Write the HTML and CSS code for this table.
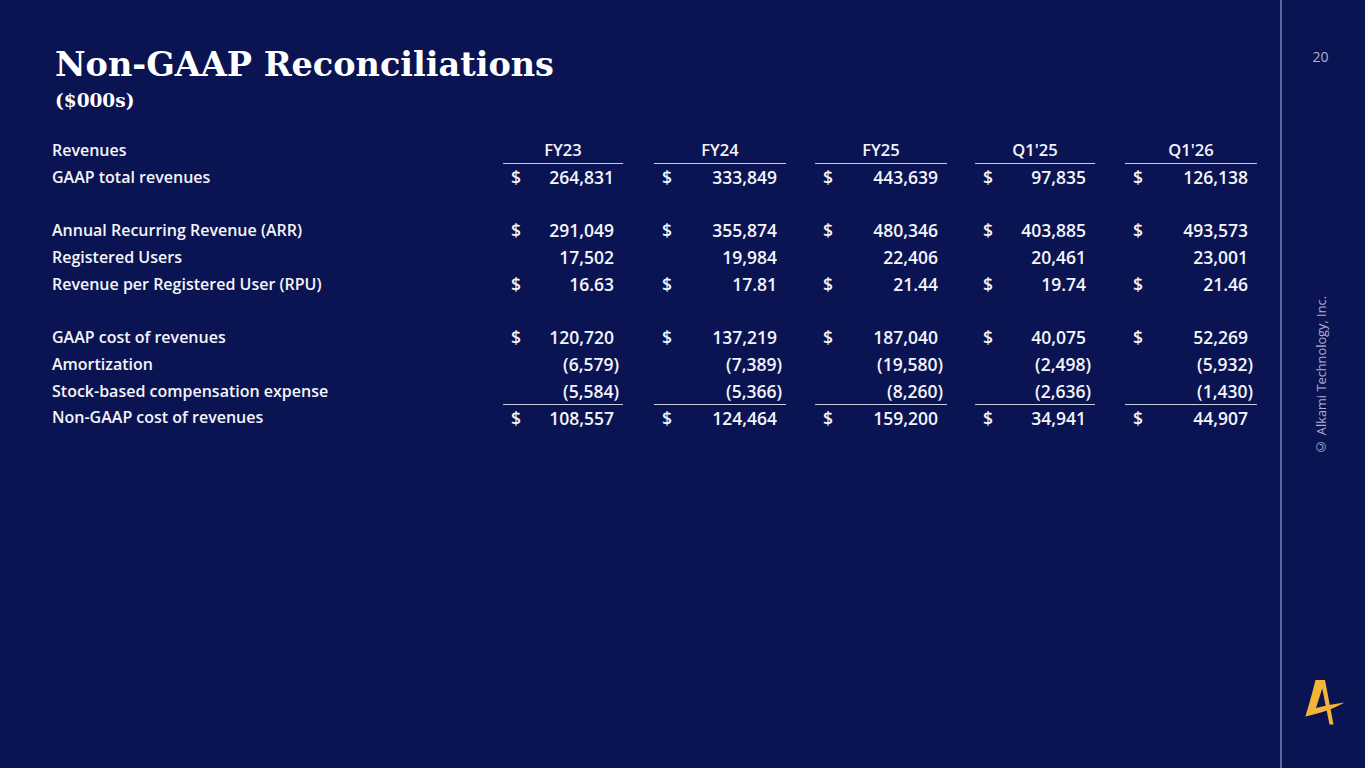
FILE: index.html
```html
<!DOCTYPE html>
<html lang="en">
<head>
<meta charset="utf-8">
<title>Non-GAAP Reconciliations</title>
<link rel="stylesheet" href="styles.css">
</head>
<body>
<div class="slide">
  <main class="content">
    <h1 class="title">Non-GAAP Reconciliations</h1>
    <p class="subtitle">($000s)</p>
    <div class="table">
      <div class="row head">
        <div class="label">Revenues</div>
        <div class="cell c1">FY23</div>
        <div class="cell c2">FY24</div>
        <div class="cell c3">FY25</div>
        <div class="cell c4">Q1'25</div>
        <div class="cell c5">Q1'26</div>
      </div>
      <div class="row">
        <div class="label">GAAP total revenues</div>
        <div class="cell c1"><span>$</span><span>264,831</span></div>
        <div class="cell c2"><span>$</span><span>333,849</span></div>
        <div class="cell c3"><span>$</span><span>443,639</span></div>
        <div class="cell c4"><span>$</span><span>97,835</span></div>
        <div class="cell c5"><span>$</span><span>126,138</span></div>
      </div>
      <div class="row"></div>
      <div class="row">
        <div class="label">Annual Recurring Revenue (ARR)</div>
        <div class="cell c1"><span>$</span><span>291,049</span></div>
        <div class="cell c2"><span>$</span><span>355,874</span></div>
        <div class="cell c3"><span>$</span><span>480,346</span></div>
        <div class="cell c4"><span>$</span><span>403,885</span></div>
        <div class="cell c5"><span>$</span><span>493,573</span></div>
      </div>
      <div class="row">
        <div class="label">Registered Users</div>
        <div class="cell c1"><span></span><span>17,502</span></div>
        <div class="cell c2"><span></span><span>19,984</span></div>
        <div class="cell c3"><span></span><span>22,406</span></div>
        <div class="cell c4"><span></span><span>20,461</span></div>
        <div class="cell c5"><span></span><span>23,001</span></div>
      </div>
      <div class="row">
        <div class="label">Revenue per Registered User (RPU)</div>
        <div class="cell c1"><span>$</span><span>16.63</span></div>
        <div class="cell c2"><span>$</span><span>17.81</span></div>
        <div class="cell c3"><span>$</span><span>21.44</span></div>
        <div class="cell c4"><span>$</span><span>19.74</span></div>
        <div class="cell c5"><span>$</span><span>21.46</span></div>
      </div>
      <div class="row"></div>
      <div class="row">
        <div class="label">GAAP cost of revenues</div>
        <div class="cell c1"><span>$</span><span>120,720</span></div>
        <div class="cell c2"><span>$</span><span>137,219</span></div>
        <div class="cell c3"><span>$</span><span>187,040</span></div>
        <div class="cell c4"><span>$</span><span>40,075</span></div>
        <div class="cell c5"><span>$</span><span>52,269</span></div>
      </div>
      <div class="row">
        <div class="label">Amortization</div>
        <div class="cell c1"><span></span><span class="neg">(6,579)</span></div>
        <div class="cell c2"><span></span><span class="neg">(7,389)</span></div>
        <div class="cell c3"><span></span><span class="neg">(19,580)</span></div>
        <div class="cell c4"><span></span><span class="neg">(2,498)</span></div>
        <div class="cell c5"><span></span><span class="neg">(5,932)</span></div>
      </div>
      <div class="row">
        <div class="label">Stock-based compensation expense</div>
        <div class="cell c1"><span></span><span class="neg">(5,584)</span></div>
        <div class="cell c2"><span></span><span class="neg">(5,366)</span></div>
        <div class="cell c3"><span></span><span class="neg">(8,260)</span></div>
        <div class="cell c4"><span></span><span class="neg">(2,636)</span></div>
        <div class="cell c5"><span></span><span class="neg">(1,430)</span></div>
      </div>
      <div class="row total">
        <div class="label">Non-GAAP cost of revenues</div>
        <div class="cell c1"><span>$</span><span>108,557</span></div>
        <div class="cell c2"><span>$</span><span>124,464</span></div>
        <div class="cell c3"><span>$</span><span>159,200</span></div>
        <div class="cell c4"><span>$</span><span>34,941</span></div>
        <div class="cell c5"><span>$</span><span>44,907</span></div>
      </div>
    </div>
  </main>
  <aside class="side">
    <div class="pagenum">20</div>
    <div class="copyright">© Alkami Technology, Inc.</div>
    <svg class="logo" viewBox="0 0 48 48" width="48" height="48" aria-label="Alkami logo">
      <path d="M20.5,2 L25,2 L33.5,46.5 L29.5,46.5 Z" fill="#f2b535"/>
      <path d="M15.5,2 L25,2 L16,30 C24,28 33.5,26 44.5,24.5 C35,30 22,35 5.5,38.5 C7,33 10,24 15.5,2 Z" fill="#f2b535"/>
    </svg>
  </aside>
</div>
</body>
</html>
```

FILE: styles.css
```css
html, body {
  margin: 0;
  padding: 0;
  background: #0b1452;
}

.slide {
  width: 1365px;
  height: 768px;
  display: flex;
  background: #0b1452;
  color: #ffffff;
  overflow: hidden;
}

.content {
  width: 1282px;
  flex: 0 0 1282px;
  box-sizing: border-box;
  border-right: 2px solid #5e689c;
  padding: 46px 0 0 52px;
}

.title {
  margin: 0 0 0 3px;
  font-family: "DejaVu Serif", "Liberation Serif", serif;
  font-weight: bold;
  font-size: 33.5px;
  line-height: 37px;
}

.subtitle {
  margin: 7px 0 0 3px;
  font-family: "DejaVu Serif", "Liberation Serif", serif;
  font-weight: bold;
  font-size: 18.5px;
  line-height: 21px;
}

.table {
  margin-top: 26px;
  font-family: "Open Sans", "Lato", "Liberation Sans", sans-serif;
  font-weight: 600;
  font-size: 16px;
  color: #f4f5fa;
}

.row {
  display: flex;
  align-items: center;
  height: 26.7px;
}

.label {
  flex: 0 0 451px;
}

.cell {
  display: flex;
  justify-content: space-between;
  align-items: center;
  box-sizing: border-box;
  height: 100%;
  padding: 0 9px 0 8px;
  font-size: 17.5px;
}

.c1 { width: 120px; margin-right: 31px; }
.c2 { width: 132px; margin-right: 29px; }
.c3 { width: 132px; margin-right: 28px; }
.c4 { width: 120px; margin-right: 30px; }
.c5 { width: 132px; }

.head .cell {
  justify-content: center;
  border-bottom: 1px solid #c9cde0;
  padding: 0;
  font-size: 16.5px;
}

.total .cell {
  border-top: 1px solid #c9cde0;
}

.neg {
  margin-right: -5px;
}

.side {
  flex: 1 1 auto;
  display: flex;
  flex-direction: column;
  align-items: center;
  padding-right: 6px;
  color: #aab1cf;
  font-family: "Open Sans", "Lato", sans-serif;
}

.pagenum {
  margin-top: 49px;
  font-size: 14px;
  line-height: 16px;
}

.copyright {
  margin-top: 231px;
  writing-mode: vertical-rl;
  transform: rotate(180deg);
  font-size: 12.8px;
  line-height: 16px;
  white-space: nowrap;
}

.logo {
  margin-top: auto;
  margin-bottom: 42px;
  margin-left: 6px;
  display: block;
}
```
